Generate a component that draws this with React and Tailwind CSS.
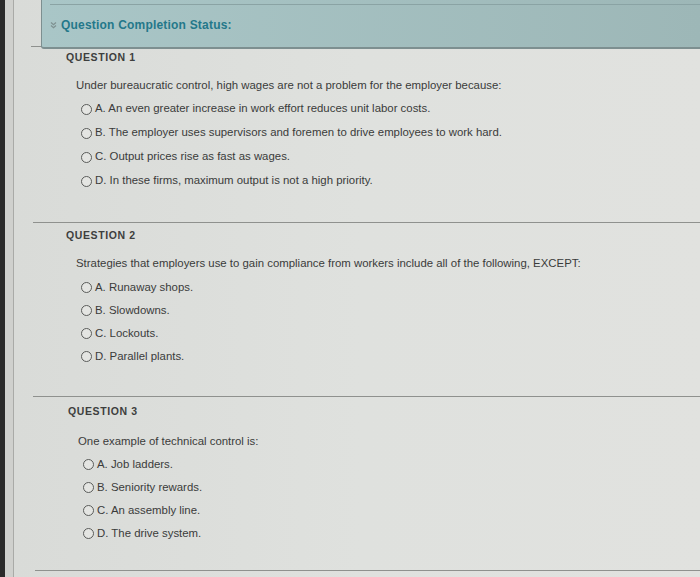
import React from "react";

const questions = [
  {
    label: "QUESTION 1",
    text: "Under bureaucratic control, high wages are not a problem for the employer because:",
    options: [
      "A. An even greater increase in work effort reduces unit labor costs.",
      "B. The employer uses supervisors and foremen to drive employees to work hard.",
      "C. Output prices rise as fast as wages.",
      "D. In these firms, maximum output is not a high priority.",
    ],
  },
  {
    label: "QUESTION 2",
    text: "Strategies that employers use to gain compliance from workers include all of the following, EXCEPT:",
    options: ["A. Runaway shops.", "B. Slowdowns.", "C. Lockouts.", "D. Parallel plants."],
  },
  {
    label: "QUESTION 3",
    text: "One example of technical control is:",
    options: ["A. Job ladders.", "B. Seniority rewards.", "C. An assembly line.", "D. The drive system."],
  },
];

function Radio() {
  return <span className="inline-block w-[11px] h-[11px] rounded-full border border-[#5a5c5a] bg-[#e4e5e2] mr-[3px] shrink-0" />;
}

function Section({ q, idx }) {
  const pad = idx === 0 ? "pt-[1px] pb-[29px]" : idx === 1 ? "pt-[5px] pb-[28px]" : "pt-[7px] pb-[25px]";
  const shift = idx === 2 ? "ml-[2px]" : "";
  return (
    <div className={pad + " " + shift}>
      <div className="pl-[52px] h-[14px] leading-[14px] text-[10.5px] font-bold tracking-[0.6px] text-[#3e3f3e]">
        {q.label}
      </div>
      <div className={(idx === 2 ? "mt-[16px]" : "mt-[14px]") + " pl-[62px] h-[14px] leading-[14px] text-[11.4px] text-[#3a3b3a]"}>
        {q.text}
      </div>
      <div className={(idx === 1 ? "mt-[6px]" : "mt-[5px]") + " pl-[67px] flex flex-col"}>
        {q.options.map((o) => (
          <div key={o} className={(idx === 0 ? "h-[24px]" : "h-[23px]") + " flex items-center text-[11.4px] text-[#3a3b3a]"}>
            <Radio />
            <span>{o}</span>
          </div>
        ))}
      </div>
    </div>
  );
}

export default function App() {
  return (
    <div
      className="w-[700px] h-[577px] overflow-hidden flex bg-[#dddfdc]"
      style={{ fontFamily: '"Liberation Sans", Arial, sans-serif' }}
    >
      <div className="w-[5px] h-full bg-[#2a2a2a] shrink-0" />
      <div className="w-[9px] h-full bg-[#cfd0cd] border-r border-[#a9aaa7] shrink-0" />
      <div className="flex-1 flex flex-col bg-gradient-to-r from-[#d9dbd8] via-[#dfe1de] to-[#e1e2df]">
        <div className="relative h-[49px]">
          <div className="absolute left-[17px] right-0 top-[46px] border-t border-[#8f918e]" />
          <div className="absolute left-[27px] right-0 top-0 h-[49px] bg-gradient-to-r from-[#a9c6c7] to-[#9db7b7] border-b-2 border-l border-[#7d8f90] rounded-bl-[3px]">
            <div className="ml-[8px] h-[5px] border-b border-[#8aa3a4]" />
            <div className="flex items-center h-[39px] pl-[8px]">
              <svg width="7" height="8" viewBox="0 0 7 8" className="mr-[4px]">
                <path d="M1 1.5 L3.5 3.8 L6 1.5 M1 4.5 L3.5 6.8 L6 4.5" fill="none" stroke="#7f9191" strokeWidth="1.2" />
              </svg>
              <span className="text-[12px] font-bold tracking-[0.2px] text-[#24788a]">Question Completion Status:</span>
            </div>
          </div>
        </div>
        {questions.map((q, i) => (
          <React.Fragment key={q.label}>
            {i > 0 && <div className="ml-[19px] border-t border-[#8f918e]" />}
            <Section q={q} idx={i} />
          </React.Fragment>
        ))}
        <div className="ml-[21px] border-t border-[#8f918e]" />
      </div>
    </div>
  );
}
